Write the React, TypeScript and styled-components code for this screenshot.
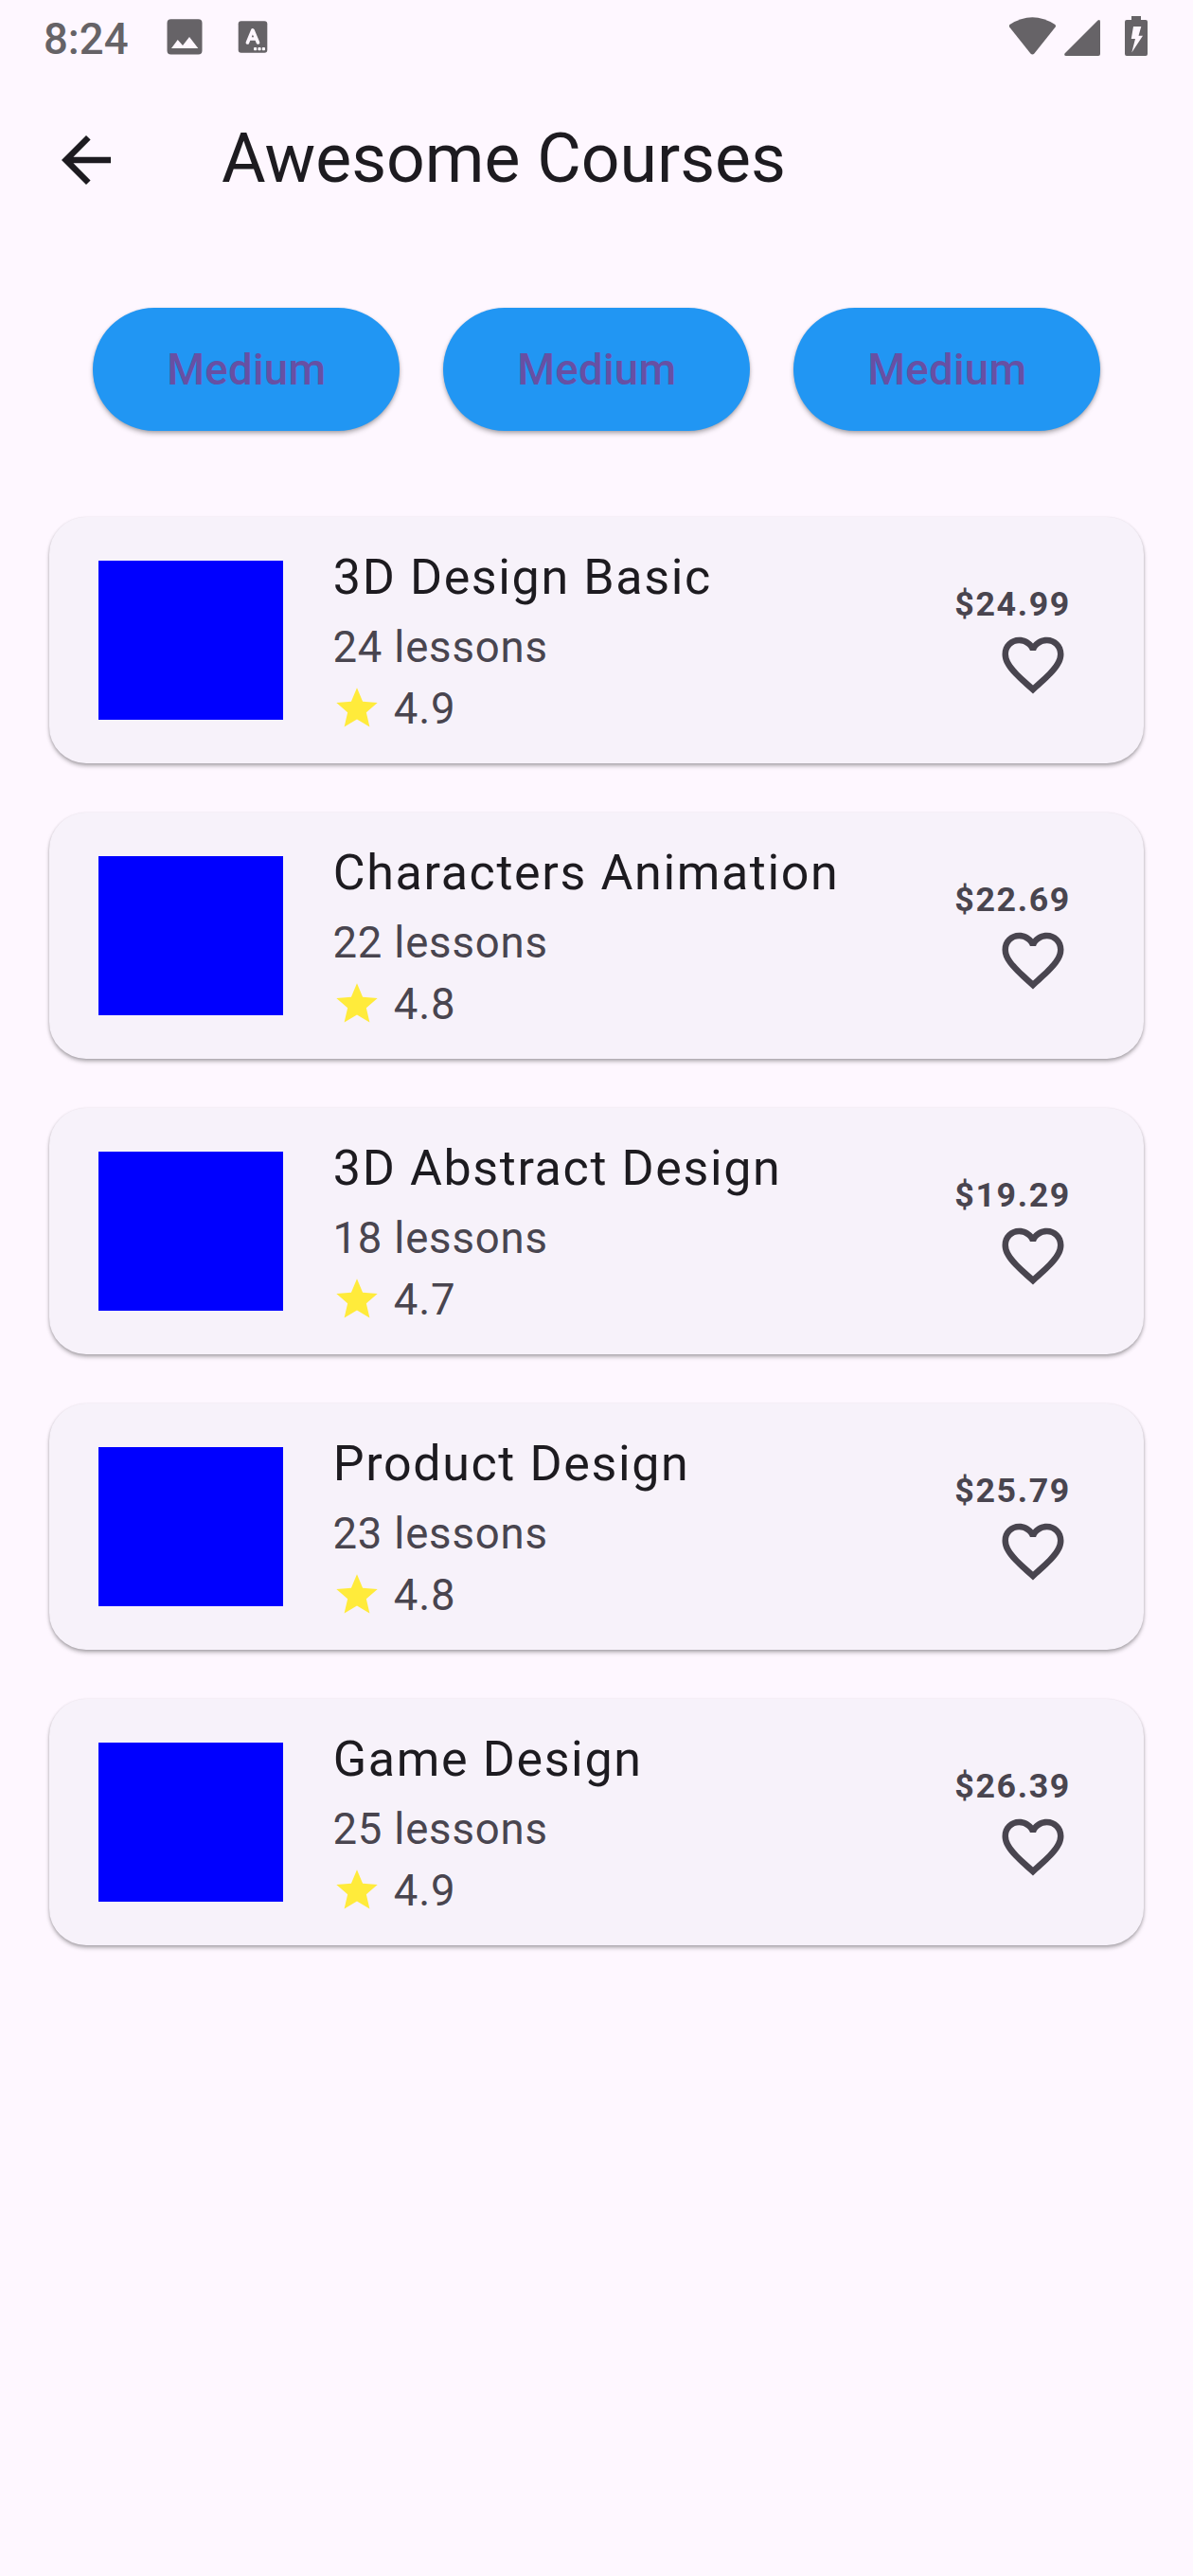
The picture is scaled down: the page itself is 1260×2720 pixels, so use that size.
import React from 'react';
import styled, { createGlobalStyle } from 'styled-components';

const dp = (n: number) => `${n * 3.25}px`;

const GlobalStyle = createGlobalStyle`
  *, *::before, *::after { box-sizing: border-box; }
  body { margin: 0; background: #fef7ff; }
`;

const Screen = styled.div`
  display: flex;
  flex-direction: column;
  width: 1260px;
  min-height: 2720px;
  background: #fef7ff;
  color: #1d1b20;
  font-family: Roboto, "Noto Sans", sans-serif;
`;

const StatusBar = styled.header`
  display: flex;
  align-items: flex-start;
  justify-content: space-between;
  height: 78px;
  padding: 0 48px 0 46px;
  color: #666367;
`;

const StatusGroup = styled.div`
  display: flex;
  align-items: flex-start;
`;

const Clock = styled.span`
  width: 130px;
  padding-top: 15px;
  font-size: ${dp(14)};
  line-height: 53px;
  font-weight: 500;
`;

const StatusIcon = styled.svg<{ $left?: number; $top: number }>`
  display: block;
  flex: none;
  margin-left: ${(p) => p.$left ?? 0}px;
  margin-top: ${(p) => p.$top}px;
`;

const AppBar = styled.div`
  display: flex;
  align-items: center;
  height: ${dp(56)};
  padding-left: ${dp(16)};
  gap: 104px;
`;

const BackButton = styled.button`
  display: flex;
  padding: 0;
  border: 0;
  background: none;
  color: inherit;
`;

const Icon = styled.svg<{ $size: number }>`
  display: block;
  flex: none;
  width: ${(p) => dp(p.$size)};
  height: ${(p) => dp(p.$size)};
  fill: currentColor;
`;

const Title = styled.h1`
  margin: 0 0 3px;
  font-size: ${dp(22)};
  line-height: ${dp(28)};
  font-weight: 400;
`;

const Filters = styled.div`
  display: flex;
  justify-content: center;
  gap: 45.5px;
  padding-top: 65px;
`;

const FilterButton = styled.button`
  width: 324.5px;
  height: ${dp(40)};
  padding: 0 0 0 0.6px;
  border: 0;
  border-radius: ${dp(20)};
  background: #2196f3;
  color: #6750a4;
  font: 500 ${dp(14)} / ${dp(20)} Roboto, sans-serif;
  letter-spacing: ${dp(0.1)};
  box-shadow: 0 3px 5px rgba(0, 0, 0, 0.26), 0 1px 3px rgba(0, 0, 0, 0.12);
`;

const CourseList = styled.main`
  display: flex;
  flex-direction: column;
  gap: ${dp(16)};
  padding: 91px ${dp(16)} 0;
`;

const Card = styled.article`
  display: flex;
  align-items: center;
  height: ${dp(80)};
  padding: 0 ${dp(24)} 0 ${dp(16)};
  border-radius: ${dp(12)};
  background: #f7f2fa;
  box-shadow: 0 3px 4px rgba(0, 0, 0, 0.26), 0 1px 3px rgba(0, 0, 0, 0.14);
`;

const Thumbnail = styled.div`
  width: ${dp(60)};
  height: 168px;
  margin-right: ${dp(16)};
  background: #0000ff;
`;

const Details = styled.div`
  flex: 1;
  height: ${dp(64)};
`;

const CourseName = styled.h2`
  margin: -1.5px 0 2.5px;
  padding-left: 0.8px;
  font-size: ${dp(16)};
  line-height: ${dp(24)};
  font-weight: 400;
  letter-spacing: ${dp(0.5)};
`;

const Meta = styled.div`
  display: flex;
  align-items: center;
  gap: 12.4px;
  height: ${dp(20)};
  padding-left: 0.4px;
  color: #49454f;
  font-size: ${dp(14)};
  line-height: ${dp(20)};
  letter-spacing: ${dp(0.25)};
`;

const Star = styled(Icon)`
  margin: 0 0.4px 0.8px -0.4px;
  color: #ffeb3b;
`;

const Trailing = styled.div`
  display: flex;
  flex-direction: column;
  align-items: flex-end;
  color: #49454f;
`;

const Price = styled.span`
  margin: 1px -1px -1px 0;
  font-size: ${dp(11)};
  line-height: ${dp(16)};
  font-weight: 700;
  letter-spacing: ${dp(0.5)};
`;

const courses = [
  { name: '3D Design Basic', lessons: 24, rating: '4.9', price: '$24.99' },
  { name: 'Characters Animation', lessons: 22, rating: '4.8', price: '$22.69' },
  { name: '3D Abstract Design', lessons: 18, rating: '4.7', price: '$19.29' },
  { name: 'Product Design', lessons: 23, rating: '4.8', price: '$25.79' },
  { name: 'Game Design', lessons: 25, rating: '4.9', price: '$26.39' },
];

export default function App() {
  return (
    <Screen>
      <GlobalStyle />
      <StatusBar>
        <StatusGroup>
          <Clock>8:24</Clock>
          <StatusIcon $top={20} width="38" height="38" viewBox="0 0 38 38">
            <path fill="currentColor" fillRule="evenodd" d="M4.500 .300h29a4 4 0 0 1 4 4v29.200a4 4 0 0 1-4 4h-29a4 4 0 0 1-4-4v-29.200a4 4 0 0 1 4-4ZM5 31h28.300L24 19l-7 9-5.300-6Z" />
          </StatusIcon>
          <StatusIcon $left={37} $top={22} width="32" height="35" viewBox="0 0 32 35">
            <rect x=".7" y=".2" width="30.600" height="33.600" rx="3" fill="currentColor" />
            <path d="M10.400 23 15.900 9.800 21.500 23M12.400 19h7" fill="none" stroke="#fef7ff" strokeWidth="3.600" strokeLinecap="round" strokeLinejoin="round" />
            <g fill="#fef7ff">
              <rect x="17" y="28.100" width="3.200" height="3.200" rx=".8" />
              <rect x="21.400" y="28.100" width="3.200" height="3.200" rx=".8" />
              <rect x="25.800" y="28.100" width="3.200" height="3.200" rx=".8" />
            </g>
          </StatusIcon>
        </StatusGroup>
        <StatusGroup>
          <StatusIcon $top={18} width="50" height="40" viewBox="0.600 0 50 40">
            <path fill="currentColor" d="M1 8Q25-7.500 49 8Q50 9 49.300 10.500L27 38.500Q25 40.500 23 38.500L.700 10.500Q0 9 1 8Z" />
          </StatusIcon>
          <StatusIcon $left={8} $top={20} width="39" height="39" viewBox="0 0 39 39">
            <path fill="currentColor" d="M35.500 1.500Q38 0 38 3V37Q38 39 36 39H2Q-.500 39 .500 36.500Z" />
          </StatusIcon>
          <StatusIcon $left={25} $top={17} width="24" height="42" viewBox="0 0 24 42">
            <path fill="currentColor" fillRule="evenodd" d="M7 0H17V4H22Q24 4 24 6V40Q24 42 22 42H2Q0 42 0 40V6Q0 4 2 4H7ZM9 11 6.800 24H11L7.300 38.500 19 20.800H14.500L17.300 11Z" />
          </StatusIcon>
        </StatusGroup>
      </StatusBar>
      <AppBar>
        <BackButton aria-label="Back">
          <Icon $size={24} viewBox="0 0 24 24">
            <path d="M20 11H7.830l5.590-5.590L12 4l-8 8 8 8 1.410-1.410L7.830 13H20v-2z" />
          </Icon>
        </BackButton>
        <Title>Awesome Courses</Title>
      </AppBar>
      <Filters>
        {[0, 1, 2].map((i) => (
          <FilterButton key={i}>Medium</FilterButton>
        ))}
      </Filters>
      <CourseList>
        {courses.map((c) => (
          <Card key={c.name}>
            <Thumbnail />
            <Details>
              <CourseName>{c.name}</CourseName>
              <Meta>{c.lessons} lessons</Meta>
              <Meta>
                <Star $size={16} viewBox="0 0 24 24">
                  <path d="M12 17.270 18.180 21l-1.640-7.030L22 9.240l-7.190-.610L12 2 9.190 8.630 2 9.240l5.460 4.730L5.820 21z" />
                </Star>
                {c.rating}
              </Meta>
            </Details>
            <Trailing>
              <Price>{c.price}</Price>
              <Icon $size={24} viewBox="0 0 24 24">
                <path d="M16.500 3c-1.740 0-3.410.810-4.500 2.090C10.910 3.810 9.240 3 7.500 3 4.420 3 2 5.420 2 8.500c0 3.780 3.400 6.860 8.550 11.540L12 21.350l1.450-1.320C18.600 15.360 22 12.280 22 8.500 22 5.420 19.580 3 16.500 3zm-4.400 15.550-.1.100-.1-.1C7.140 14.240 4 11.390 4 8.500 4 6.500 5.500 5 7.500 5c1.540 0 3.040.990 3.570 2.360h1.870C13.460 5.990 14.960 5 16.500 5c2 0 3.500 1.500 3.500 3.500 0 2.890-3.140 5.740-7.900 10.050z" />
              </Icon>
            </Trailing>
          </Card>
        ))}
      </CourseList>
    </Screen>
  );
}
